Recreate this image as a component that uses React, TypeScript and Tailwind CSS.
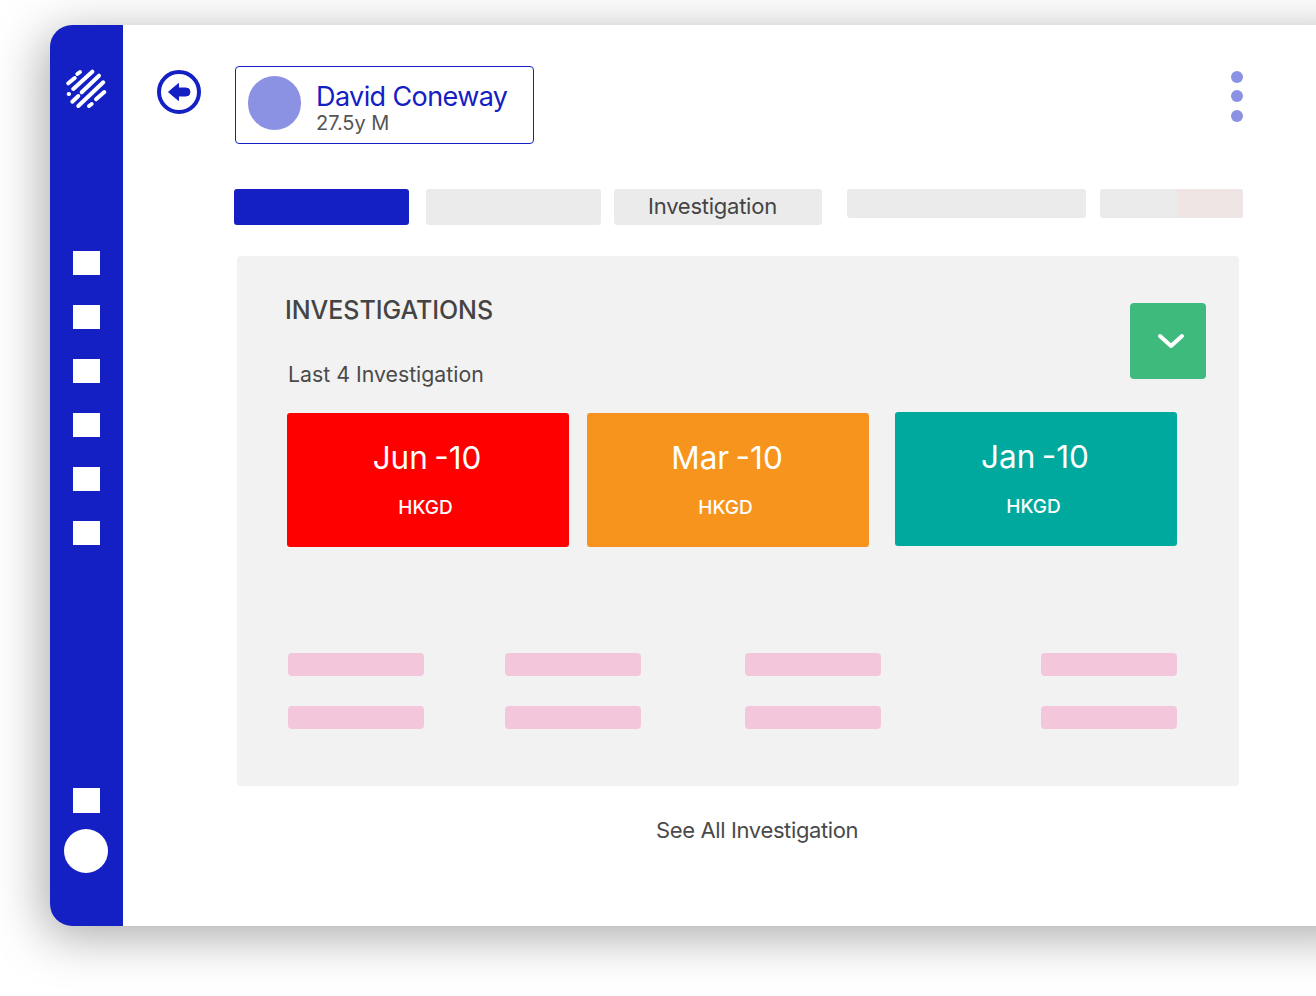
const FONT = "font-['Inter','Noto_Sans',sans-serif]";

function Logo() {
  return (
    <svg width="42" height="40" viewBox="0 0 42 40" fill="none" stroke="#fff" strokeLinecap="round" strokeWidth="4">
      <path d="M2.3 14.3L8.7 9" />
      <path d="M11.3 5L14 3" />
      <path d="M7.3 20L26.3 2.7" />
      <path d="M15.7 23.3L33 6.7" />
      <path d="M2.7 25L3 25" />
      <path d="M6.3 32.7L12.3 27" />
      <path d="M12.3 37L37.3 13.3" />
      <path d="M23 37L25.7 35" />
      <path d="M30 30.3L38.3 23" />
    </svg>
  );
}

function BackIcon() {
  return (
    <svg width="44" height="44" viewBox="0 0 44 44" fill="none">
      <circle cx="22" cy="22" r="20" stroke="#1420c4" strokeWidth="4" />
      <path d="M11.5 22L21.5 13.5V18H29a4 4 0 0 1 0 8H21.5V30.5Z" fill="#1420c4" stroke="#1420c4" strokeWidth="1" strokeLinejoin="round" />
    </svg>
  );
}

function SideSquare() {
  return <div className="h-6 w-[27px] bg-white" />;
}

function DateCard({ title, color, offset }: { title: string; color: string; offset: string }) {
  return (
    <div className={`flex h-[134px] w-[282px] flex-col items-center rounded-[3px] pr-[5px] text-white ${color} ${offset}`}>
      <div className="mt-[25px] ml-[3px] text-[31.5px] leading-[40px] font-[430] [word-spacing:-2.5px]">{title}</div>
      <div className="mt-[16px] text-[19px] leading-[28px] font-medium">HKGD</div>
    </div>
  );
}

function PinkRow({ className = "" }: { className?: string }) {
  return (
    <div className={`ml-[51px] flex w-[889px] ${className}`}>
      <div className="h-[23px] w-[136px] rounded-[4px] bg-[#f3c6dc]" />
      <div className="ml-[81px] h-[23px] w-[136px] rounded-[4px] bg-[#f3c6dc]" />
      <div className="ml-[104px] h-[23px] w-[136px] rounded-[4px] bg-[#f3c6dc]" />
      <div className="ml-[160px] h-[23px] w-[136px] rounded-[4px] bg-[#f3c6dc]" />
    </div>
  );
}

export default function App() {
  return (
    <div className={`h-[996px] w-[1316px] overflow-hidden bg-white pt-[25px] pl-[50px] ${FONT}`}>
      <div className="flex h-[901px] w-[1320px] overflow-hidden rounded-l-[22px] bg-white shadow-[-6px_10px_50px_rgba(0,0,0,0.34)]">
        <aside className="flex w-[73px] shrink-0 flex-col items-start bg-[#1420c4]">
          <div className="mt-[44px] ml-[16px]"><Logo /></div>
          <div className="mt-[142px] ml-[23px] flex flex-col gap-[30px]">
            <SideSquare />
            <SideSquare />
            <SideSquare />
            <SideSquare />
            <SideSquare />
            <SideSquare />
          </div>
          <div className="mt-[243px] ml-[23px] h-[25px] w-[27px] bg-white" />
          <div className="mt-[16px] ml-[14px] h-[44px] w-[44px] rounded-full bg-white" />
        </aside>
        <main className="w-[1120px] shrink-0">
          <div className="flex h-[164px] items-start">
            <div className="mt-[45px] ml-[34px]"><BackIcon /></div>
            <div className="mt-[41px] ml-[34px] flex h-[78px] w-[299px] items-start rounded-[4px] border border-[#1420c4] pl-[12px]">
              <div className="mt-[9px] h-[54px] w-[53px] rounded-full bg-[#8b92e4]" />
              <div className="mt-[14px] ml-[15px]">
                <div className="text-[27px] leading-[31px] font-[430] tracking-[-0.6px] text-[#1420c4]">David Coneway</div>
                <div className="text-[20px] leading-[22px] tracking-[-0.05px] text-[#555555]">27.5y M</div>
              </div>
            </div>
            <div className="mt-[46px] ml-[697px] flex flex-col">
              <div className="h-3 w-3 rounded-full bg-[#8b92e4]" />
              <div className="mt-[7px] h-3 w-3 rounded-full bg-[#8b92e4]" />
              <div className="mt-[8px] h-3 w-3 rounded-full bg-[#8b92e4]" />
            </div>
          </div>
          <div className="ml-[111px] flex items-start">
            <div className="h-[36px] w-[175px] rounded-[3px] bg-[#1420c4]" />
            <div className="ml-[17px] h-[36px] w-[175px] rounded-[3px] bg-[#ebebeb]" />
            <div className="ml-[13px] flex h-[36px] w-[208px] items-center justify-center rounded-[3px] bg-[#ebebeb] pr-[11px] pb-[2px] text-[22px] tracking-[-0.25px] text-[#444444]">Investigation</div>
            <div className="ml-[25px] h-[29px] w-[239px] rounded-[3px] bg-[#ebebeb]" />
            <div className="ml-[14px] flex h-[29px] w-[143px] justify-end overflow-hidden rounded-[3px] bg-[#ebebeb]">
              <div className="h-full w-[66px] bg-[#f0e5e5]" />
            </div>
          </div>
          <section className="mt-[31px] ml-[114px] h-[530px] w-[1002px] rounded-[4px] bg-[#f2f2f2]">
            <div className="flex items-start justify-between pr-[33px]">
              <div>
                <h1 className="mt-[38px] ml-[48px] text-[25px] leading-[32px] font-medium tracking-[-0.05px] text-[#444444]">INVESTIGATIONS</h1>
                <p className="mt-[34px] ml-[51px] text-[21.3px] leading-[28px] text-[#4a4a4a]">Last 4 Investigation</p>
              </div>
              <div className="mt-[47px] flex h-[76px] w-[76px] items-center justify-center rounded-[4px] bg-[#3eba7c] pl-[5px]">
                <svg width="28" height="16" viewBox="0 0 28 16" fill="none" stroke="#fff" strokeWidth="4" strokeLinecap="round" strokeLinejoin="round">
                  <path d="M3 3L14 13L25 3" />
                </svg>
              </div>
            </div>
            <div className="mt-[25px] ml-[50px] flex items-start">
              <DateCard title="Jun -10" color="bg-[#ff0000]" offset="" />
              <DateCard title="Mar -10" color="bg-[#f7941d]" offset="ml-[18px]" />
              <DateCard title="Jan -10" color="bg-[#00a99d]" offset="ml-[26px] -mt-[1px]" />
            </div>
            <PinkRow className="mt-[106px]" />
            <PinkRow className="mt-[30px]" />
          </section>
          <div className="mt-[30px] ml-[533px] text-[22px] leading-[28px] tracking-[-0.37px] text-[#4a4a4a]">See All Investigation</div>
        </main>
      </div>
    </div>
  );
}
